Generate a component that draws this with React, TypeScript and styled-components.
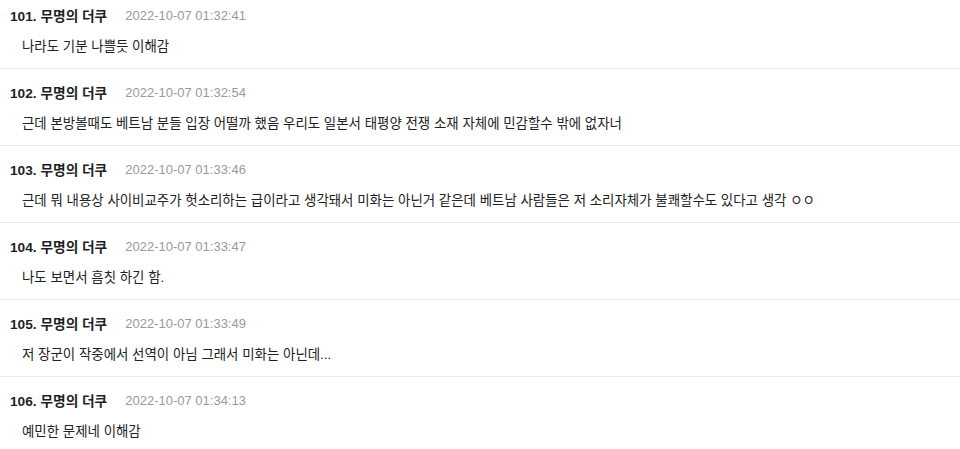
import styled, { createGlobalStyle } from "styled-components";

const GlobalStyle = createGlobalStyle`
  body {
    margin: 0;
    background: #ffffff;
    font-family: "Liberation Sans", "Noto Sans CJK KR", sans-serif;
    color: #222222;
  }
`;

const CommentList = styled.ul`
  list-style: none;
  margin: 0;
  padding: 0;
  width: 960px;
`;

const CommentItem = styled.li`
  display: flex;
  flex-direction: column;
  gap: 13px;
  padding: 14px 10px 11px 10px;
  border-bottom: 1px solid #ebebeb;

  &:first-child {
    padding-top: 6px;
  }
  &:last-child {
    border-bottom: none;
  }
`;

const CommentHeader = styled.div`
  display: flex;
  align-items: center;
  gap: 18px;
  height: 18px;
`;

const Author = styled.span`
  font-size: 13.7px;
  font-weight: 700;
  color: #1f1f1f;
`;

const Timestamp = styled.span`
  font-size: 13px;
  color: #9a9a9a;
`;

const Body = styled.p`
  margin: 0;
  padding-left: 12px;
  font-size: 13.45px;
  line-height: 20px;
  color: #222222;
`;

type Comment = { no: number; time: string; text: string };

const comments: Comment[] = [
  { no: 101, time: "2022-10-07 01:32:41", text: "나라도 기분 나쁠듯 이해감" },
  {
    no: 102,
    time: "2022-10-07 01:32:54",
    text: "근데 본방볼때도 베트남 분들 입장 어떨까 했음 우리도 일본서 태평양 전쟁 소재 자체에 민감할수 밖에 없자너",
  },
  {
    no: 103,
    time: "2022-10-07 01:33:46",
    text: "근데 뭐 내용상 사이비교주가 헛소리하는 급이라고 생각돼서 미화는 아닌거 같은데 베트남 사람들은 저 소리자체가 불쾌할수도 있다고 생각 ㅇㅇ",
  },
  { no: 104, time: "2022-10-07 01:33:47", text: "나도 보면서 흠칫 하긴 함." },
  {
    no: 105,
    time: "2022-10-07 01:33:49",
    text: "저 장군이 작중에서 선역이 아님 그래서 미화는 아닌데...",
  },
  { no: 106, time: "2022-10-07 01:34:13", text: "예민한 문제네 이해감" },
];

export default function App() {
  return (
    <>
      <GlobalStyle />
      <CommentList>
        {comments.map((c) => (
          <CommentItem key={c.no}>
            <CommentHeader>
              <Author>{c.no}. 무명의 더쿠</Author>
              <Timestamp>{c.time}</Timestamp>
            </CommentHeader>
            <Body>{c.text}</Body>
          </CommentItem>
        ))}
      </CommentList>
    </>
  );
}
